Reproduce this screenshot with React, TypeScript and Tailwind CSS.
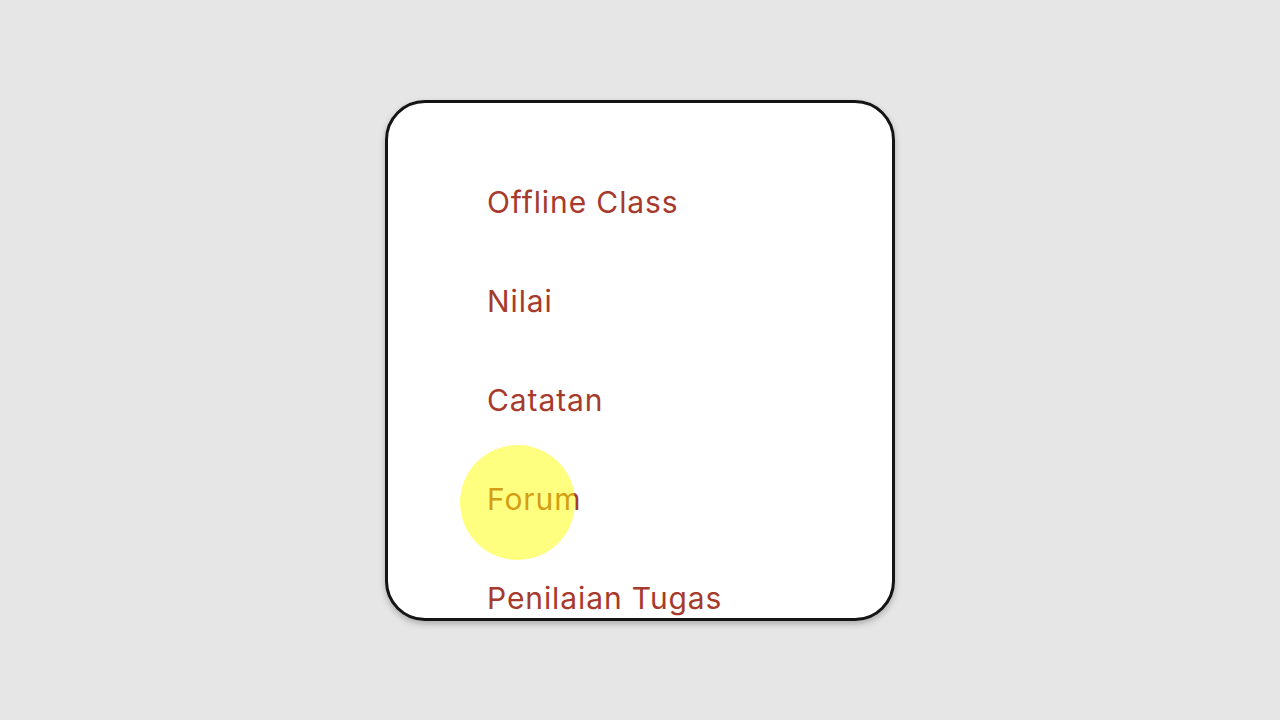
const items = ["Offline Class", "Nilai", "Catatan", "Forum", "Penilaian Tugas"];

export default function App() {
  return (
    <main className="flex h-[720px] w-full items-center justify-center bg-[#e6e6e6]">
      <div className="relative h-[521px] w-[510px] overflow-hidden rounded-[40px] border-[3px] border-[#141414] bg-white shadow-[0_3px_6px_rgba(0,0,0,0.25)]">
        <ul className="pl-[99px] pt-[50px] font-['Inter',sans-serif] text-[30px] tracking-[0.9px] text-[#a63a2c]">
          {items.map((item) => (
            <li key={item} className="flex h-[99px] items-center leading-none">
              {item}
            </li>
          ))}
        </ul>

        {/* touch ripple */}
        <div className="absolute left-[72px] top-[342px] h-[115px] w-[115px] rounded-full bg-[#ffff00]/50" />
      </div>
    </main>
  );
}
